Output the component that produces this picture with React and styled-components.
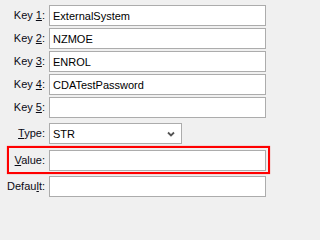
import React from 'react';
import styled, { createGlobalStyle } from 'styled-components';

var GlobalStyle = createGlobalStyle`
  html, body {
    margin: 0;
    padding: 0;
    background: #f0f0f0;
  }
  body {
    font-family: "Liberation Sans", Arial, sans-serif;
    font-size: 11px;
    color: #000;
  }
`;

var Form = styled.div`
  box-sizing: border-box;
  width: 271px;
  height: 202px;
  padding-top: 5px;
  display: flex;
  flex-direction: column;
`;

var Row = styled.div`
  display: flex;
  flex-direction: row;
  align-items: center;
  height: 21px;
  margin-bottom: ${props => props.gap || '2px'};
`;

var HighlightRow = styled.div`
  box-sizing: border-box;
  display: flex;
  flex-direction: row;
  align-items: flex-start;
  margin-left: 7px;
  width: 263px;
  height: 28px;
  padding: 2px 2px 1px 0;
  border: 2px solid #ff0000;
  box-shadow: 0 0 1px rgba(255, 0, 0, 0.6);
  margin-bottom: 2px;
`;

var Label = styled.label`
  box-sizing: border-box;
  flex: 0 0 ${props => props.width || '45px'};
  text-align: right;
  margin-right: 4px;
  line-height: 21px;
  white-space: nowrap;
  color: #0a0a14;
  u {
    text-decoration: underline;
    text-underline-offset: 1px;
  }
`;

var TextBox = styled.input`
  box-sizing: border-box;
  width: 217px;
  height: 21px;
  margin: 0;
  padding: 0 3px;
  border: 1px solid #acacac;
  background: #fff;
  font-family: "Liberation Sans", Arial, sans-serif;
  font-size: 11px;
  color: #000;
  outline: none;
`;

var Select = styled.div`
  box-sizing: border-box;
  width: 133px;
  height: 21px;
  display: flex;
  flex-direction: row;
  align-items: center;
  justify-content: space-between;
  padding: 0 6px 0 3px;
  border: 1px solid #acacac;
  background: #fff;
  color: #000;
`;

var Chevron = () => (
  <svg width="8" height="6" viewBox="0 0 8 6">
    <path d="M1 1.5 L4 4.5 L7 1.5" fill="none" stroke="#555" strokeWidth="1.8" />
  </svg>
);

var keys = ['ExternalSystem', 'NZMOE', 'ENROL', 'CDATestPassword', ''];

export default function App() {
  return (
    <Form>
      <GlobalStyle />
      {keys.map((value, i) => (
        <Row key={i} gap={i === keys.length - 1 ? '5px' : '2px'}>
          <Label>Key <u>{i + 1}</u>:</Label>
          <TextBox type="text" defaultValue={value} readOnly />
        </Row>
      ))}
      <Row gap="2px">
        <Label><u>T</u>ype:</Label>
        <Select>
          <span>STR</span>
          <Chevron />
        </Select>
      </Row>
      <HighlightRow>
        <Label width="36px"><u>V</u>alue:</Label>
        <TextBox type="text" defaultValue="" readOnly />
      </HighlightRow>
      <Row>
        <Label>Defau<u>l</u>t:</Label>
        <TextBox type="text" defaultValue="" readOnly />
      </Row>
    </Form>
  );
}
